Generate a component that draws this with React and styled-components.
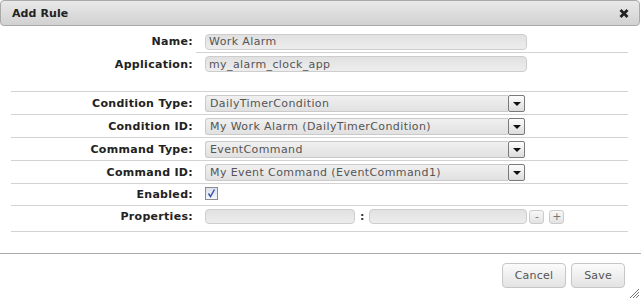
import React from "react";
import styled, { createGlobalStyle } from "styled-components";

const Global = createGlobalStyle`
  html, body { margin: 0; background: #fff; }
  body {
    font-family: "DejaVu Sans", Verdana, sans-serif;
    font-size: 11px;
    color: #222;
  }
  * { box-sizing: border-box; }
`;

const Dialog = styled.div`
  position: relative;
  width: 641px;
  height: 300px;
  display: flex;
  flex-direction: column;
  overflow: hidden;
  background: #fff;
`;

const TitleBar = styled.div`
  height: 26px;
  flex: none;
  margin-right: 1px;
  border: 1px solid #a9a9a9;
  border-radius: 4px;
  background: linear-gradient(#e9e9e9, #d1d1d1);
  display: flex;
  align-items: center;
  justify-content: space-between;
  padding: 0 10px 0 11px;
  font-weight: bold;
  letter-spacing: 0.1px;
  color: #222;
`;

const Content = styled.div`
  flex: 1;
  padding: 4px 13px 0 11px;
`;

const Row = styled.div`
  display: grid;
  grid-template-columns: 185px 1fr;
  height: ${(p) => (p.$h || 22) + (p.$line ? 1 : 0)}px;
  border-bottom: ${(p) => (p.$line ? "1px solid #d2d2d2" : "none")};
`;

const Spacer = styled.div`
  height: 17px;
  border-bottom: 1px solid #d2d2d2;
`;

const Label = styled.div`
  text-align: right;
  padding-right: 3px;
  font-weight: bold;
  letter-spacing: 0.3px;
  color: #222;
  align-self: center;
  padding-bottom: ${(p) => p.$pb || 0}px;
`;

const Value = styled.div`
  display: flex;
  align-items: center;
  padding-left: 9px;
  padding-top: ${(p) => p.$pt || 0}px;
  padding-bottom: ${(p) => p.$pb || 0}px;
  border-bottom: ${(p) => (p.$line ? "1px solid #d2d2d2" : "none")};
`;

const TextInput = styled.input`
  width: ${(p) => p.$w || 322}px;
  height: ${(p) => p.$hh || 16}px;
  margin: 0;
  padding: 0 3px;
  border: 1px solid #cdcdcd;
  border-radius: 4px;
  background: linear-gradient(#e1e1e1, #ededed);
  font-family: inherit;
  font-size: 11px;
  letter-spacing: 0.4px;
  color: #555;
  outline: none;
`;

const SelectBox = styled.div`
  display: flex;
  width: 320px;
  height: 17px;
`;

const SelectValue = styled.div`
  flex: 1;
  display: flex;
  align-items: center;
  padding-left: 4px;
  border: 1px solid #cacaca;
  border-right: none;
  border-radius: 3px 0 0 3px;
  background: linear-gradient(#f0f0f0, #e1e1e1);
  color: #555;
  letter-spacing: 0.4px;
  white-space: nowrap;
  overflow: hidden;
`;

const Arrow = styled.div`
  width: 17px;
  height: 17px;
  border: 1px solid #7a7a7a;
  border-radius: 2px;
  background: linear-gradient(#fdfdfd, #dcdcdc);
  display: flex;
  align-items: center;
  justify-content: center;
  padding-top: 2px;
  &::after {
    content: "";
    border-left: 4px solid transparent;
    border-right: 4px solid transparent;
    border-top: 4px solid #111;
  }
`;

const Check = styled.span`
  width: 13px;
  height: 13px;
  border: 1px solid #8c8c8c;
  background: linear-gradient(#dbe2ee, #f3f5f9);
  display: flex;
  align-items: center;
  justify-content: center;
`;

const Colon = styled.span`
  font-weight: bold;
  margin: 0 5px;
  color: #333;
`;

const MiniButton = styled.span`
  width: 15px;
  height: 14px;
  margin-left: ${(p) => p.$ml || 0}px;
  border: 1px solid #cbcbcb;
  border-radius: 3px;
  background: linear-gradient(#f7f7f7, #e3e3e3);
  color: #777;
  font-size: 11px;
  line-height: 11px;
  display: flex;
  align-items: center;
  justify-content: center;
`;

const Footer = styled.div`
  height: 47px;
  flex: none;
  border-top: 1px solid #ababab;
  display: flex;
  justify-content: flex-end;
  align-items: flex-start;
  gap: 5px;
  padding: 9px 16px 0 0;
`;

const Button = styled.button`
  height: 25px;
  padding: 0 12px;
  border: 1px solid #c6c6c6;
  border-radius: 4px;
  background: linear-gradient(#fbfbfb, #e3e3e3);
  font-family: inherit;
  font-size: 11px;
  letter-spacing: 0.2px;
  color: #555;
`;

const Grip = styled.svg`
  position: absolute;
  right: 1px;
  bottom: 1px;
`;

function Select({ children }) {
  return (
    <SelectBox>
      <SelectValue>{children}</SelectValue>
      <Arrow />
    </SelectBox>
  );
}

export default function App() {
  return (
    <Dialog>
      <Global />
      <TitleBar>
        <span>Add Rule</span>
        <svg width="10" height="9" viewBox="0 0 10 9">
          <path d="M1.5 1 L8.5 8 M8.5 1 L1.5 8" stroke="#222" strokeWidth="2.8" strokeLinecap="butt" />
        </svg>
      </TitleBar>
      <Content>
        <Row $h={23}>
          <Label>Name:</Label>
          <Value $line $pt={1}>
            <TextInput defaultValue="Work Alarm" />
          </Value>
        </Row>
        <Row>
          <Label>Application:</Label>
          <Value>
            <TextInput defaultValue="my_alarm_clock_app" />
          </Value>
        </Row>
        <Spacer />
        <Row $line>
          <Label>Condition Type:</Label>
          <Value>
            <Select>DailyTimerCondition</Select>
          </Value>
        </Row>
        <Row $line>
          <Label>Condition ID:</Label>
          <Value>
            <Select>My Work Alarm (DailyTimerCondition)</Select>
          </Value>
        </Row>
        <Row $line>
          <Label>Command Type:</Label>
          <Value>
            <Select>EventCommand</Select>
          </Value>
        </Row>
        <Row $line>
          <Label>Command ID:</Label>
          <Value>
            <Select>My Event Command (EventCommand1)</Select>
          </Value>
        </Row>
        <Row $line $h={21}>
          <Label>Enabled:</Label>
          <Value $pb={2}>
            <Check>
              <svg width="9" height="9" viewBox="0 0 9 9">
                <path d="M1.5 4.5 L3.5 7.5 L7.5 0.5" fill="none" stroke="#3b56a8" strokeWidth="1.5" />
              </svg>
            </Check>
          </Value>
        </Row>
        <Row $line $h={25}>
          <Label $pb={4}>Properties:</Label>
          <Value $pb={4}>
            <TextInput $w={150} $hh={15} />
            <Colon>:</Colon>
            <TextInput $w={158} $hh={15} />
            <MiniButton $ml={2}>-</MiniButton>
            <MiniButton $ml={5}>+</MiniButton>
          </Value>
        </Row>
      </Content>
      <Footer>
        <Button>Cancel</Button>
        <Button>Save</Button>
      </Footer>
      <Grip width="11" height="11" viewBox="0 0 11 11">
        <path d="M10 1 L1 10 M10 4 L4 10 M10 7 L7 10" stroke="#777" strokeWidth="1" />
      </Grip>
    </Dialog>
  );
}
